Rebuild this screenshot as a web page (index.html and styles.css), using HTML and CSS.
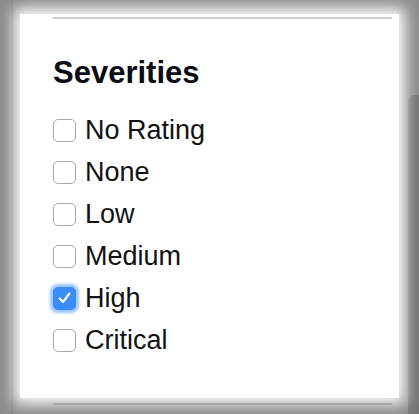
FILE: index.html
```html
<!DOCTYPE html>
<html>
<head>
<meta charset="utf-8">
<link rel="stylesheet" href="styles.css">
</head>
<body>
<div class="backdrop-bar"></div>
<div class="backdrop-line"></div>
<div class="panel">
  <div class="rule"></div>
  <h2 class="title">Severities</h2>
  <ul class="options">
    <li class="option"><span class="box"></span><span class="label">No Rating</span></li>
    <li class="option"><span class="box"></span><span class="label">None</span></li>
    <li class="option"><span class="box"></span><span class="label">Low</span></li>
    <li class="option"><span class="box"></span><span class="label">Medium</span></li>
    <li class="option"><span class="box checked"><svg viewBox="0 0 24 24" width="24" height="24"><path d="M6.5 12.5 L10.5 16.5 L17.5 7" fill="none" stroke="#fff" stroke-width="2.6" stroke-linecap="round" stroke-linejoin="round"/></svg></span><span class="label">High</span></li>
    <li class="option"><span class="box"></span><span class="label">Critical</span></li>
  </ul>
  <div class="rule bottom"></div>
</div>
</body>
</html>
```
FILE: styles.css
```css
html, body {
  margin: 0;
  padding: 0;
}
body {
  width: 419px;
  height: 414px;
  overflow: hidden;
  background: #8c8c8c;
  font-family: "Liberation Sans", Arial, sans-serif;
  color: #111;
  position: relative;
}
.backdrop-bar {
  position: absolute;
  left: 408px;
  top: 95px;
  width: 14px;
  height: 330px;
  background: #747474;
  border-radius: 6px 0 0 0;
}
.backdrop-line {
  position: absolute;
  left: 11px;
  top: 0;
  width: 2px;
  height: 414px;
  background: #808080;
}
.panel {
  position: relative;
  margin: 14px 20px 0 20px;
  height: 384px;
  background: #fff;
  box-shadow: 0 0 14px 6px #fff;
  padding: 3px 7px 0 33px;
  box-sizing: border-box;
}
.rule {
  height: 2px;
  background: #d0d0d0;
}
.rule.bottom {
  margin-top: 42px;
  background: #a8a8a8;
}
.title {
  margin: 36px 0 18px 0;
  font-size: 31px;
  line-height: 36px;
  font-weight: bold;
  color: #0c0c14;
}
.options {
  list-style: none;
  margin: 0;
  padding: 0;
}
.option {
  display: flex;
  align-items: center;
  height: 42px;
  gap: 9px;
}
.box {
  width: 21px;
  height: 21px;
  border: 1px solid #a9a9a9;
  border-radius: 5px;
  background: #fff;
  box-sizing: content-box;
  display: flex;
  align-items: center;
  justify-content: center;
  flex: none;
}
.box.checked {
  background: #3a8cf6;
  border-color: #3a8cf6;
  box-shadow: 0 0 3px 3px rgba(70, 150, 250, 0.55);
}
.box svg {
  display: block;
}
.label {
  font-size: 27px;
  line-height: 42px;
  color: #111;
}
```
